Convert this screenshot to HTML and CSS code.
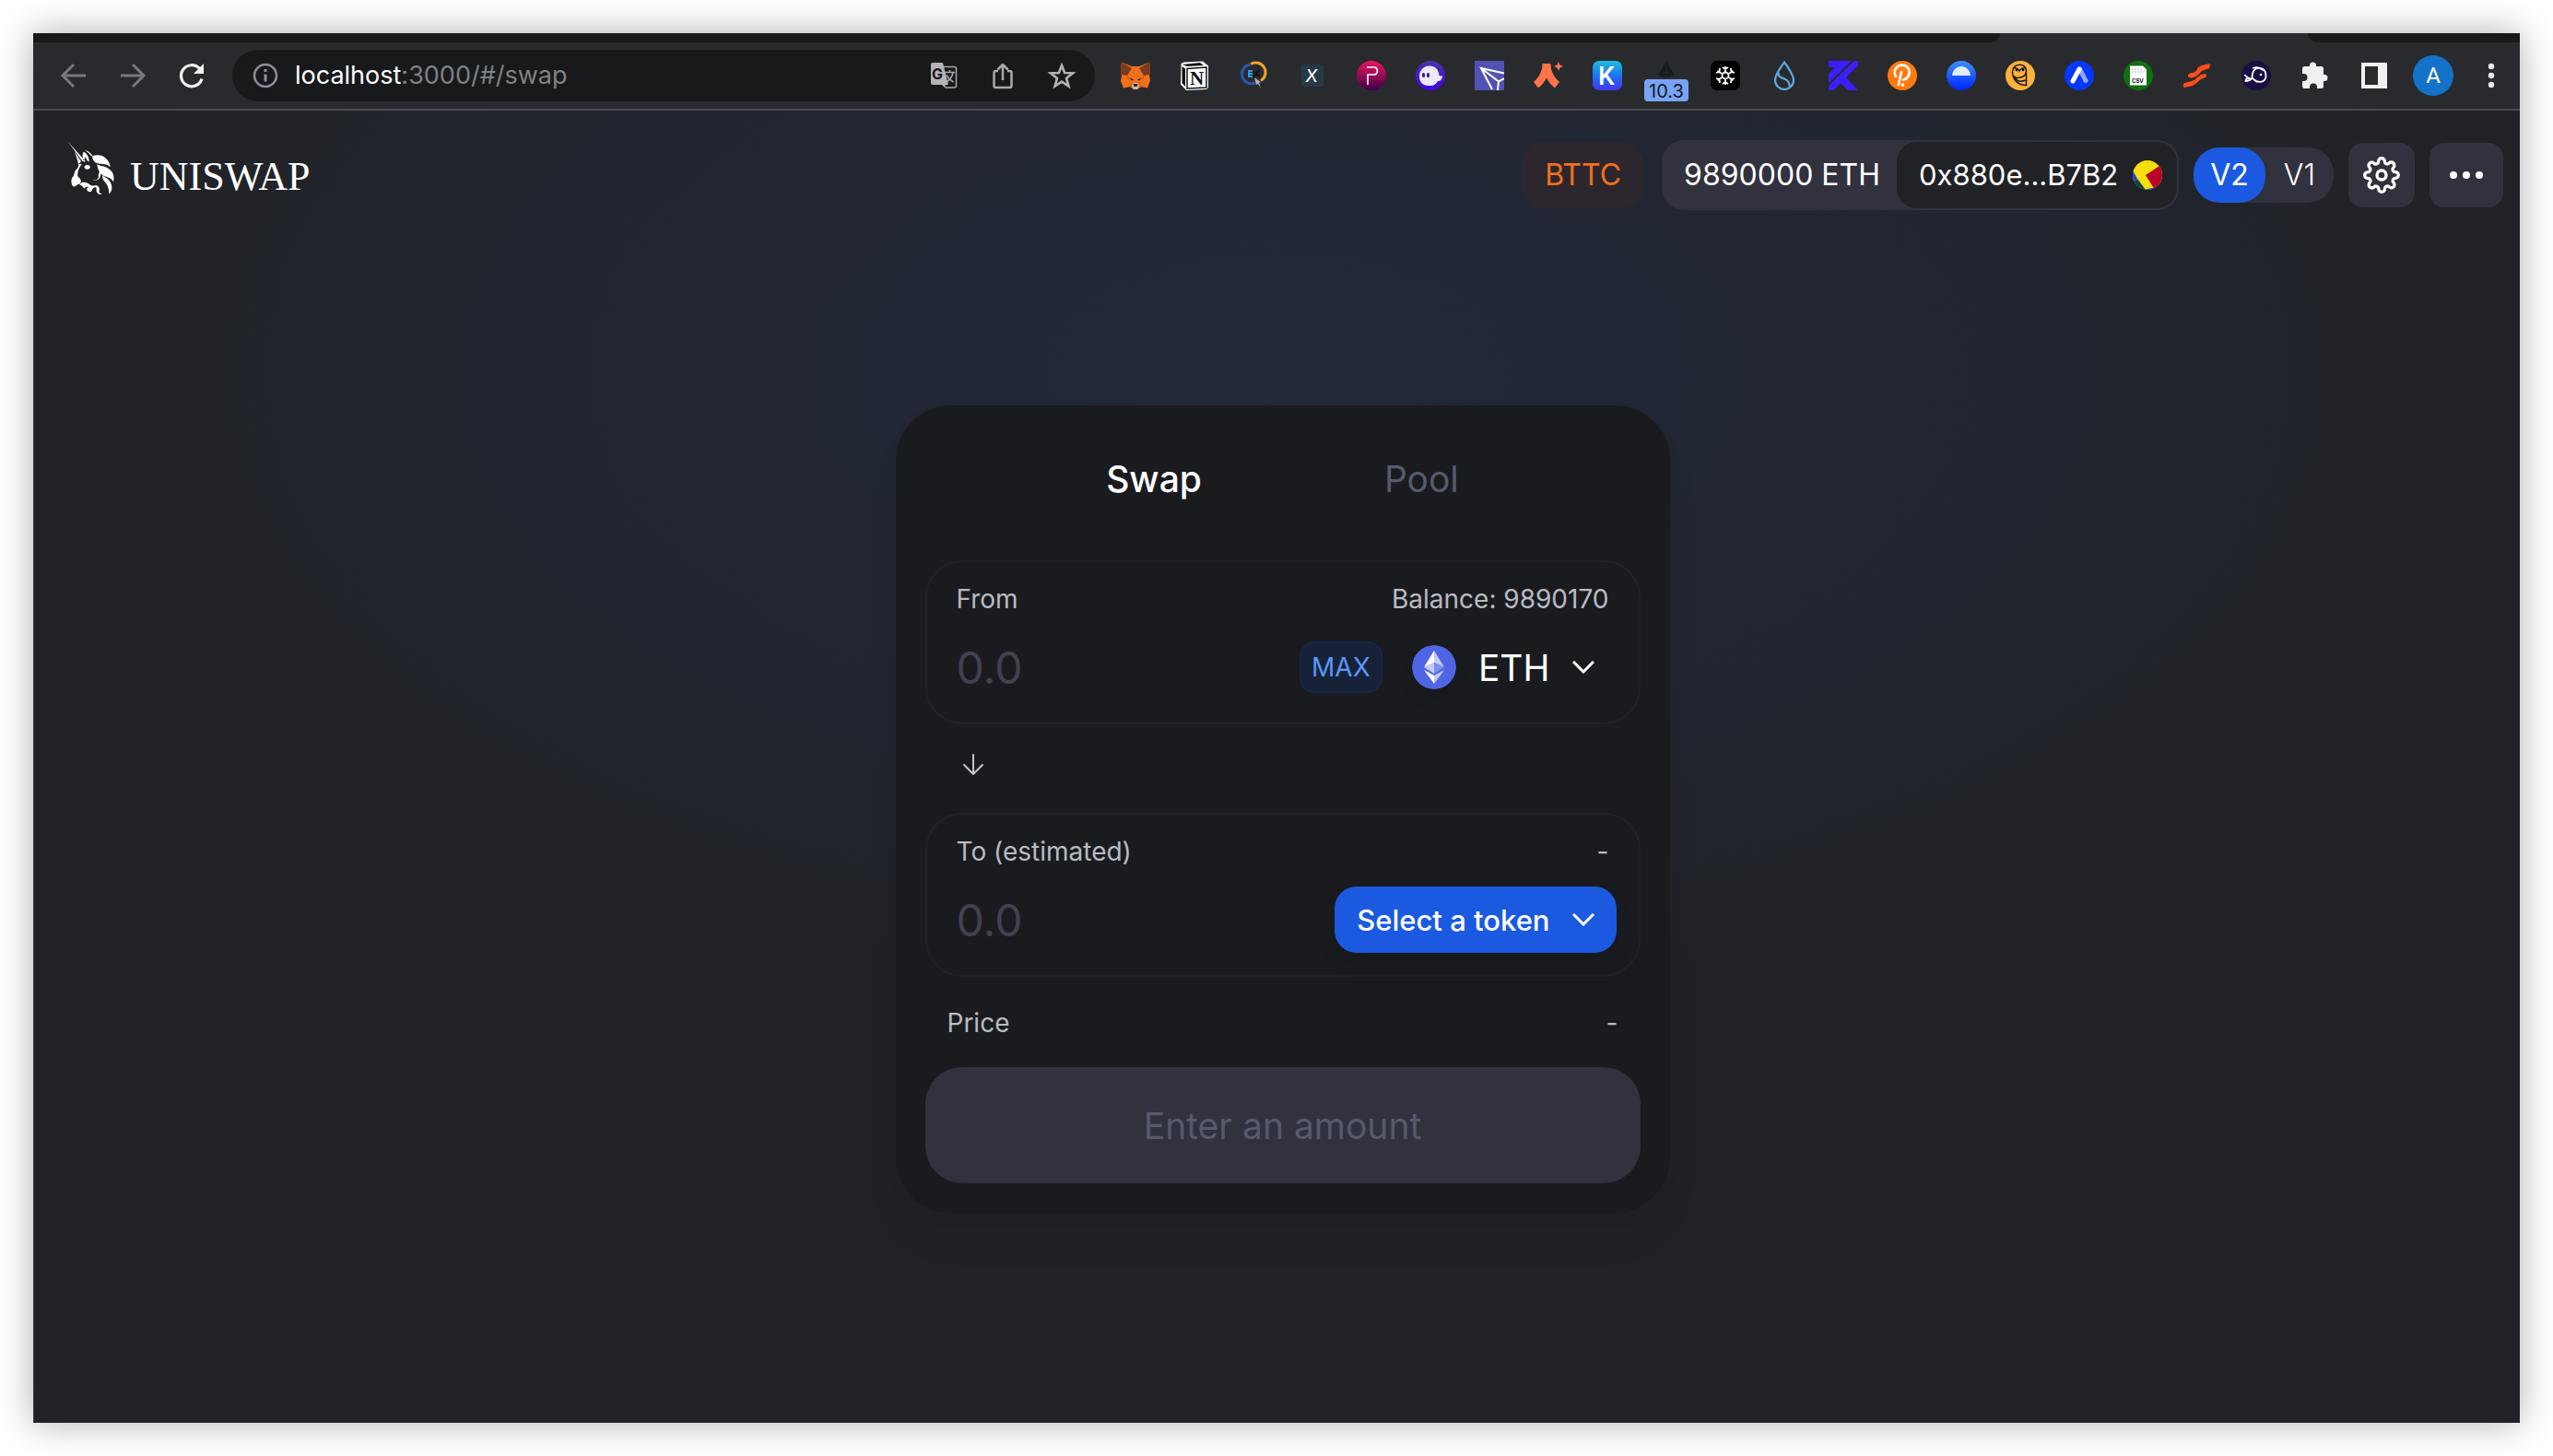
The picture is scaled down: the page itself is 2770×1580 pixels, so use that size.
FILE: index.html
```html
<!DOCTYPE html>
<html lang="en">
<head>
<meta charset="utf-8">
<title>Uniswap Interface</title>
<link rel="stylesheet" href="styles.css">
</head>
<body>
<div class="window">
  <div class="tabstrip"><span class="tab-rest"></span><span class="tab-active"></span><span class="tab-end"></span></div>
  <div class="toolbar">
    <button class="tool" aria-label="Back"><svg viewBox="0 0 32 32" fill="none" stroke="#77797c" stroke-width="3"><path d="M29 16H5M16 4 4 16l12 12"/></svg></button>
    <button class="tool" aria-label="Forward"><svg viewBox="0 0 32 32" fill="none" stroke="#77797c" stroke-width="3"><path d="M3 16h24M16 4l12 12-12 12"/></svg></button>
    <button class="tool" aria-label="Reload"><svg viewBox="0 0 32 32"><path d="M27 19.500A11.500 11.500 0 1 1 24.500 8.500" fill="none" stroke="#f1f1f2" stroke-width="3.200"/><path d="M29 3v11H18z" fill="#f1f1f2"/></svg></button>
    <div class="omnibox">
      <svg class="info" viewBox="0 0 28 28"><circle cx="14" cy="14" r="12" fill="none" stroke="#8b9199" stroke-width="2.500"/><path d="M12.500 12.500h3v8h-3zM12.500 7h3v3h-3z" fill="#8b9199"/></svg>
      <span class="url"><b>localhost</b>:3000/#/swap</span>
      <button class="tool" aria-label="Translate"><svg viewBox="0 0 32 32"><path d="M15 6.500h12.500a2 2 0 0 1 2 2v18.500a2 2 0 0 1-2 2H17" fill="none" stroke="#a9a9aa" stroke-width="1.500"/><path d="M17 12.500h11M22.500 10v2.500M18.500 23c4-2 6.500-6 7.500-10M19 15.500c1.500 3 4 5.500 7.500 7.500" fill="none" stroke="#a9a9aa" stroke-width="1.600"/><path d="M4 2h9.500a2 2 0 0 1 1.800 1.300L21 26h-3l-1 3-3-3H4a2 2 0 0 1-2-2V4a2 2 0 0 1 2-2z" fill="#b4b4b5"/><text x="3" y="20" font-family="Inter, sans-serif" font-size="16" font-weight="700" fill="#18191b">G</text></svg></button>
      <button class="tool" aria-label="Share"><svg viewBox="0 0 32 32" fill="none" stroke="#a9a9aa" stroke-width="2.500" stroke-linejoin="round"><path d="M11 11H8.500a2 2 0 0 0-2 2v14a2 2 0 0 0 2 2h15a2 2 0 0 0 2-2V13a2 2 0 0 0-2-2H21M16 21V4M10.500 9.500 16 4l5.500 5.500"/></svg></button>
      <button class="tool" aria-label="Bookmark"><svg viewBox="0 0 32 32" fill="none" stroke="#b4b4b5" stroke-width="2.600"><path d="m16 5 3.100 8 8.900.400-7 5.500 2.400 8.600L16 22.600l-7.400 4.900 2.400-8.600-7-5.500 8.900-.400z"/></svg></button>
    </div>
    <div class="extensions">
      <button class="tool" aria-label="MetaMask"><svg viewBox="0 0 32 32"><path d="M1 1.500 12 6h8l11-4.500 1 9-1 5 1 6-3 8-7-1.500L18 31h-4l-4-3-7 1.500L0 22l1-6-1-5z" fill="#f0701c"/><path d="M1 1.500 12 8 7 16 1 15 0 10zM31 1.500 20 8l5 8 6-1 1-5z" fill="#7b3a20"/><path d="m7 16 5.500 4.500L7 20zM25 16l-5.500 4.500L25 20zM3 29.500l7-2.500 3-5-2 6zM29 29.500 22 27l-3-5 2 6z" fill="#d75a14"/><path d="m12 27 2-3h4l2 3-2 4h-4z" fill="#cdbdac"/><path d="M13.500 25h5l-1 3h-3zM10 18.500l4 2-2 1zM22 18.500l-4 2 2 1z" fill="#20262c"/></svg></button>
      <button class="tool" aria-label="Notion"><svg viewBox="0 0 32 32"><path d="m1.500 3 3-1.500L25 .500l6 5V29l-2 2-22 1L1 25.500z" fill="#fff"/><path d="m3 4 19-2 4 3-18 1zM2.500 6 6 8.500V28l-3.500-4z" fill="#111"/><path d="m8 8.500 21-1.500v22L8 30z" fill="#fff" stroke="#111" stroke-width="1.500"/><text x="11" y="26" font-family="Liberation Serif, serif" font-size="21" font-weight="700" fill="#111">N</text></svg></button>
      <button class="tool" aria-label="Explorer search"><svg viewBox="0 0 32 32"><g fill="none" stroke-width="3"><path d="M13 3.500a10.500 10.500 0 0 1 11 18" stroke="#eea52b"/><path d="M12 4a10.500 10.500 0 1 0 6 20" stroke="#2c56a8"/></g><path d="M10 10h5v2h-3v1h3v2h-3v1h3v2h-5z" fill="#2d9cdb"/><path d="m16 18 6-8M16 11l6 6" stroke="#101214" stroke-width="2"/><path d="m17 18 7 5-2 1 2 6-3-5-2 1z" fill="#aeb0b3"/></svg></button>
      <button class="tool" aria-label="X wallet"><svg viewBox="0 0 32 32"><rect x="4" y="4" width="24" height="24" rx="3" fill="#263a45"/><text x="9" y="23" font-family="Lato, sans-serif" font-size="20" font-style="italic" fill="#fff">X</text></svg></button>
      <button class="tool" aria-label="Pontem"><svg viewBox="0 0 32 32"><defs><linearGradient id="gp" x2="0" y2="1"><stop stop-color="#ef1262"/><stop offset="1" stop-color="#3d0148"/></linearGradient></defs><circle cx="16" cy="16" r="16" fill="url(#gp)"/><path d="M12 26V15h8a4.500 4.500 0 0 0 0-8h-9" fill="none" stroke="#fff" stroke-width="1.600"/></svg></button>
      <button class="tool" aria-label="Phantom"><svg viewBox="0 0 32 32"><defs><linearGradient id="gg" x2="0" y2="1"><stop stop-color="#4936a8"/><stop offset="1" stop-color="#4302ec"/></linearGradient></defs><circle cx="16" cy="16" r="16" fill="url(#gg)"/><path d="M4 17C4 10 9 5.500 15 5.500S25 9 25.500 16c1.500 1 3 0 3.500.500-.500 4.500-3 5.500-5 5.500-3 5-6 5-10 5-5 0-10-3-10-10z" fill="#eceaf6"/><rect x="7" y="13" width="3" height="5" rx="1.500" fill="#3b1d91"/><rect x="12" y="13" width="3" height="5" rx="1.500" fill="#3b1d91"/></svg></button>
      <button class="tool" aria-label="TronLink"><svg viewBox="0 0 32 32"><path d="M0 0h32v32H0z" fill="#5352b4"/><path d="M32 13.500 7 8l12 23M7 8l19 14.500L25 32M26 22.500l6-3.500" fill="none" stroke="#fff" stroke-width="2"/></svg></button>
      <button class="tool" aria-label="Argent"><svg viewBox="0 0 32 32" fill="#ff734a"><path d="M9.500 3h9c0 8 3 14 9.500 20l-5 6.500c-4-3-7-7-9-11-2 4-5 8-9 11L0 23C6.500 17 9.500 11 9.500 3zM27 1l1.500 3.500L32 6l-3.500 1.500L27 11l-1.500-3.500L22 6l3.500-1.500z"/></svg></button>
      <button class="tool" aria-label="Keplr"><svg viewBox="0 0 32 32"><defs><linearGradient id="gk" x2="0" y2="1"><stop stop-color="#1fbcd9"/><stop offset=".5" stop-color="#1c75f2"/><stop offset="1" stop-color="#4434ee"/></linearGradient></defs><rect width="32" height="32" rx="7" fill="url(#gk)"/><text x="6" y="26" font-family="Roboto, sans-serif" font-size="28" font-weight="500" fill="#fff">K</text></svg></button>
      <button class="tool with-badge" aria-label="Gas price 10.3"><svg viewBox="0 0 32 32"><path d="M16 0 7 16l9 2 9-2zM7 18h18" fill="#17181a"/><path d="M16 1v17M7 16l9-4 9 4" fill="none" stroke="#242528" stroke-width="1"/></svg><span class="badge">10.3</span></button>
      <button class="tool" aria-label="Snowflake wallet"><svg viewBox="0 0 32 32"><rect width="32" height="32" rx="7" fill="#000"/><g fill="none" stroke="#fff" stroke-width="1.800"><circle cx="16" cy="16" r="3.500"/><path d="M16 12V6M16 20v6M19.500 14l5-3M12.500 18l-5 3M19.500 18l5 3M12.500 14l-5-3M13 7l3 2 3-2M13 25l3-2 3 2M22 8l.500 4L26 13M10 24l-.500-4L6 19M22 24l.500-4L26 19M10 8l-.500 4L6 13"/></g></svg></button>
      <button class="tool" aria-label="Sui"><svg viewBox="0 0 32 32" fill="none" stroke="#5fa9e4" stroke-width="2.200"><path d="M16 1.500C21 9 26 15 26 21a10 10 0 0 1-20 0c0-6 5-12 10-19.500zM10 13c-1 5 3 5 7 7s5 4 4.500 8"/></svg></button>
      <button class="tool" aria-label="Kaikas"><svg viewBox="0 0 32 32" fill="#3b1ffc"><path d="M0 0h25L0 24V14l7-7H0zM28 0h4v5L19 18l13 14H21l-8-8-7 8H0v-5z"/></svg></button>
      <button class="tool" aria-label="Polkadot"><svg viewBox="0 0 32 32"><circle cx="16" cy="16" r="16" fill="#ff7a10"/><path d="M9 17a8 8 0 1 1 8 3.500M15 12l-3 14" fill="none" stroke="#fff" stroke-width="2.600" stroke-linecap="round"/><circle cx="16.500" cy="26" r="1.800" fill="#fff"/></svg></button>
      <button class="tool" aria-label="Horizon wallet"><svg viewBox="0 0 32 32"><defs><linearGradient id="gh" x2="0" y2="1"><stop stop-color="#3a92ff"/><stop offset="1" stop-color="#0022fb"/></linearGradient></defs><circle cx="16" cy="16" r="16" fill="url(#gh)"/><path d="M6 16a10 10 0 0 1 20 0z" fill="#e4edf7"/></svg></button>
      <button class="tool" aria-label="Owl wallet"><svg viewBox="0 0 32 32"><circle cx="16" cy="16" r="16" fill="#fdb13b"/><g fill="none" stroke="#1d1b17" stroke-width="1.500"><path d="M22.500 11v15.500C14 26.500 7.500 21 7.500 12c0-10 15-10 15-1 0 8-12 9-14 5M8 8c3-1 6 1 7 3 1-2 4-4 7-3M10 17c2 6 6 6 12 4"/></g><circle cx="12" cy="10" r="1.300"/><circle cx="19" cy="10" r="1.300"/></svg></button>
      <button class="tool" aria-label="Aptos wallet"><svg viewBox="0 0 32 32"><circle cx="16" cy="16" r="16" fill="#0638fb"/><path d="m16.500 9 6.500 12.500" stroke="#8fa4fd" stroke-width="5" stroke-linecap="round"/><path d="M16 9 9 22" stroke="#fff" stroke-width="5" stroke-linecap="round"/></svg></button>
      <button class="tool" aria-label="CSV export"><svg viewBox="0 0 32 32"><circle cx="16" cy="16" r="16" fill="#0f700f"/><path d="M7 5.500h14l4 4v17H7z" fill="#fff"/><path d="M9 9h11M9 12h14" stroke="#b9b9be" stroke-dasharray="2 1"/><text x="9" y="24" font-family="Inter, sans-serif" font-size="6" font-weight="700" fill="#222">CSV</text></svg></button>
      <button class="tool" aria-label="Solflare"><svg viewBox="0 0 32 32" fill="#fb4e17"><path d="m17 7 4-2 8-2c1 0 1 3 0 5l-8 3-5 5c-4 3-9 3-10 1 0-3 1-3 4-4 4 0 5-2 7-6zM16 18l4-3 5-1c1 0 1 3 0 4l-5 2-6 5-3 2-9 2c-2 0-1-4 0-5l8-2c3-1 4-2 6-4z"/></svg></button>
      <button class="tool" aria-label="Fish wallet"><svg viewBox="0 0 32 32"><circle cx="16" cy="16" r="16" fill="#190f43"/><path d="M3.500 15c1 3 4 3 5 4-2 0-4 1-4 3 4 0 6-1 7-4 0-5 2-9 6-10 6-1 9 3 9 8 0 6-5 8-10 6M12 8c5-2 8-1 11 2M12 19l5 4" fill="none" stroke="#fff" stroke-width="1.800"/><circle cx="21" cy="15" r="1.300" fill="#fff"/></svg></button>
      <button class="tool" aria-label="Extensions"><svg viewBox="0 0 32 32"><path d="M2 8.500A2.500 2.500 0 0 1 4.500 6H10V5a3.500 3.500 0 0 1 7 0v1h5.500A2.500 2.500 0 0 1 25 8.500V15h1a3.500 3.500 0 0 1 0 7h-1v5.500a2.500 2.500 0 0 1-2.500 2.500H18v-1.500a4 4 0 0 0-8 0V30H4.500A2.500 2.500 0 0 1 2 27.500V22h1.500a4 4 0 0 0 0-8H2z" fill="#eff0f2"/></svg></button>
      <button class="tool" aria-label="Side panel"><svg viewBox="0 0 32 32"><path d="M2 2h28v28H2zM6 6v20h14V6z" fill="#eff0f2" fill-rule="evenodd"/></svg></button>
      <button class="tool" aria-label="Profile"><span class="avatar">A</span></button>
      <button class="tool" aria-label="Browser menu"><svg viewBox="0 0 32 32" fill="#e8e9eb"><circle cx="16" cy="6" r="3.200"/><circle cx="16" cy="16" r="3.200"/><circle cx="16" cy="26" r="3.200"/></svg></button>
    </div>
  </div>

  <div class="page">
    <header class="header">
      <a class="logo" href="#/swap">
        <svg viewBox="20 14 156 180" fill="#fff" aria-hidden="true"><path d="M21 17 67 80c3 4 9 5 13 4L38 37zM43 51l22 33-9 8c-3-17-10-32-13-41zM74 81c-5-9-5-24-1-29 8 4 18 12 18 32-4 1-9-5-11-16-3 5-3 9-6 13z"/><path d="M78 48c10 1 17 7 24 17l-5 1C92 57 85 53 78 48zM101 66c25-10 52 1 60 36-16-14-35-7-50-15-5-3-10-13-10-21zM117 93c13 8 29 5 41 17 12 9 16 23 12 40-6-12-20-16-31-19-14-7-20-22-22-38zM134 130c22 8 33 25 31 44-2 8-6 14-9 16 0-15-2-21-8-33-6-9-14-13-14-27z"/><path d="M56 91c2 5 0 12-8 20-6 8-4 18-12 25-5 10-3 21 3 29 7 2 11-4 15-6 4-1 8-5 11-10-1-9-7-13-11-17-2-11 3-27 13-40zM126 108c8 24 0 39-25 38 15-1 23-6 20-18 1-7 6-14 5-20zM59 158c10-11 24-7 32-1 7 7 16 5 26 5 8 5 8 10 7 17-1 9 9 12 12 9-8 7-24 0-21-14 1-10-12-8-14 2-2 9-14 8-17 1-2-7 2-10 8-7-6-8-17-1-17 3-2-6-8-12-16-15z"/><ellipse cx="85" cy="102" rx="9" ry="7"/></svg>
        <span>UNISWAP</span>
      </a>
      <div class="controls">
        <span class="network">BTTC</span>
        <div class="account">
          <span class="balance">9890000 ETH</span>
          <button class="address">0x880e...B7B2
            <svg viewBox="0 0 32 32" aria-hidden="true"><defs><clipPath id="round"><circle cx="16" cy="16" r="16"/></clipPath></defs><g clip-path="url(#round)"><path d="M0 0h32v32H0z" fill="#f5df0c"/><path d="m14 16 18-12v28h-8z" fill="#bd0329"/><path d="m0 24 5-4 9 12H0z" fill="#113e50"/><path d="M0 11 5 20 0 24zM12 32l13-3v3z" fill="#1c3fe4"/></g></svg>
          </button>
        </div>
        <div class="versions"><button class="version current">V2</button><a class="version" href="#/v1">V1</a></div>
        <button class="square" aria-label="Settings"><svg viewBox="0 0 24 24" fill="none" stroke="#fff" stroke-width="2" stroke-linecap="round" stroke-linejoin="round"><circle cx="12" cy="12" r="3"/><path d="M19.400 15a1.650 1.650 0 0 0 .33 1.820l.06.06a2 2 0 0 1 0 2.830 2 2 0 0 1-2.830 0l-.06-.06a1.650 1.650 0 0 0-1.820-.33 1.650 1.650 0 0 0-1 1.510V21a2 2 0 0 1-2 2 2 2 0 0 1-2-2v-.09A1.650 1.650 0 0 0 9 19.400a1.650 1.650 0 0 0-1.820.33l-.06.06a2 2 0 0 1-2.830 0 2 2 0 0 1 0-2.830l.06-.06a1.650 1.650 0 0 0 .33-1.820 1.650 1.650 0 0 0-1.510-1H3a2 2 0 0 1-2-2 2 2 0 0 1 2-2h.09A1.650 1.650 0 0 0 4.600 9a1.650 1.650 0 0 0-.33-1.820l-.06-.06a2 2 0 0 1 0-2.830 2 2 0 0 1 2.830 0l.06.06a1.650 1.650 0 0 0 1.820.33H9a1.650 1.650 0 0 0 1-1.510V3a2 2 0 0 1 2-2 2 2 0 0 1 2 2v.09a1.650 1.650 0 0 0 1 1.510 1.650 1.650 0 0 0 1.820-.33l.06-.06a2 2 0 0 1 2.830 0 2 2 0 0 1 0 2.830l-.06.06a1.650 1.650 0 0 0-.33 1.820V9a1.650 1.650 0 0 0 1.510 1H21a2 2 0 0 1 2 2 2 2 0 0 1-2 2h-.09a1.650 1.650 0 0 0-1.510 1z"/></svg></button>
        <button class="square more" aria-label="More"><svg viewBox="0 0 40 40" fill="#fff"><circle cx="6" cy="20" r="4"/><circle cx="20" cy="20" r="4"/><circle cx="34" cy="20" r="4"/></svg></button>
      </div>
    </header>

    <main class="main">
      <section class="card">
        <nav class="tabs"><a class="active" href="#/swap">Swap</a><a href="#/pool">Pool</a></nav>
        <div class="field">
          <div class="field-head"><label for="from">From</label><span>Balance: 9890170</span></div>
          <div class="field-row">
            <input id="from" type="text" inputmode="decimal" placeholder="0.0">
            <button class="max">MAX</button>
            <button class="token">
              <svg class="eth" viewBox="0 0 48 48" aria-hidden="true"><circle cx="24" cy="24" r="24" fill="#5065e4"/><path d="M24 6v13L13 24z" fill="#fff"/><path d="m24 6 11 18-11-5z" fill="#c3cbf6"/><path d="m13 24 11-5v12z" fill="#c3cbf6"/><path d="m35 24-11-5v12z" fill="#7f8fec"/><path d="m13 27 11 6v9z" fill="#fff"/><path d="m35 27-11 6v9z" fill="#c3cbf6"/></svg>
              <span>ETH</span>
              <svg class="chevron" viewBox="0 0 24 14" fill="none" stroke="#fff" stroke-width="3"><path d="m1 1 11 11L23 1"/></svg>
            </button>
          </div>
        </div>
        <div class="switch"><button aria-label="Switch direction"><svg viewBox="0 0 24 24" fill="none" stroke="#c3c5cb" stroke-width="2" stroke-linecap="round" stroke-linejoin="round"><path d="M12 1v21M2 12l10 10 10-10"/></svg></button></div>
        <div class="field">
          <div class="field-head"><label for="to">To (estimated)</label><span>-</span></div>
          <div class="field-row">
            <input id="to" type="text" inputmode="decimal" placeholder="0.0">
            <button class="token select">
              <span>Select a token</span>
              <svg class="chevron" viewBox="0 0 24 14" fill="none" stroke="#fff" stroke-width="3"><path d="m1 1 11 11L23 1"/></svg>
            </button>
          </div>
        </div>
        <div class="price"><span>Price</span><span>-</span></div>
        <button class="submit" disabled>Enter an amount</button>
      </section>
    </main>
  </div>
</div>
</body>
</html>
```
FILE: styles.css
```css
* { box-sizing: border-box; }

body {
  margin: 0;
  min-height: 100vh;
  padding: 36px;
  display: flex;
  background: #fff;
  color: #fff;
  font-family: Inter, "Liberation Sans", sans-serif;
}

button {
  margin: 0;
  padding: 0;
  border: 0;
  background: none;
  color: inherit;
  font: inherit;
}

a { color: inherit; text-decoration: none; }
svg { display: block; flex: none; }

.window {
  flex: 1;
  min-width: 0;
  display: flex;
  flex-direction: column;
  background: #212226;
  box-shadow: 0 0 36px rgba(0, 0, 0, .32);
}

/* Browser chrome */
.tabstrip { display: flex; height: 10px; background: #292a2d; }
.tab-rest { flex: 1; background: #18191b; border-bottom-right-radius: 10px; }
.tab-active { width: 334px; }
.tab-end { width: 230px; background: #18191b; border-bottom-left-radius: 10px; }

.toolbar {
  display: flex;
  align-items: center;
  height: 74px;
  padding-left: 12px;
  background: #292a2d;
  border-bottom: 2px solid #4b4c4f;
}

.tool {
  flex: none;
  width: 64px;
  height: 64px;
  display: flex;
  align-items: center;
  justify-content: center;
}
.tool svg { width: 32px; height: 32px; }

.omnibox {
  flex: 1;
  min-width: 0;
  height: 56px;
  margin: 0 12px;
  padding: 0 4px 0 22px;
  display: flex;
  align-items: center;
  border-radius: 28px;
  background: #18191b;
}
.info { width: 28px; height: 28px; }
.url {
  flex: 1;
  margin-left: 18px;
  font-size: 27px;
  line-height: 36px;
  color: #808183;
}
.url b { font-weight: 400; color: #fff; }

.extensions { display: flex; align-items: center; }
.extensions .tool:last-child { width: 62px; }

.with-badge { position: relative; }
.badge {
  position: absolute;
  top: 36px;
  left: 8px;
  width: 48px;
  height: 24px;
  border-radius: 4px;
  background: #78a3f6;
  color: #18191b;
  font-size: 20px;
  line-height: 26px;
  text-align: center;
}
.avatar {
  width: 44px;
  height: 44px;
  border-radius: 50%;
  background: #1273c8;
  font-family: Roboto, sans-serif;
  font-size: 24px;
  line-height: 44px;
  text-align: center;
}

/* App */
.page {
  flex: 1;
  border-left: 1px solid #3a3b3f;
  background: radial-gradient(50% 50% at 50% 20%, rgba(33, 98, 220, .1) 0%, rgba(33, 98, 220, .05) 60%, rgba(33, 98, 220, 0) 100%);
}

.header {
  display: flex;
  justify-content: space-between;
  align-items: center;
  padding: 32px 18px 0 36px;
}
.logo {
  display: flex;
  align-items: flex-start;
  gap: 16px;
  height: 76px;
  font-family: "Liberation Serif", serif;
  font-size: 44px;
  line-height: 48px;
}
.logo svg { width: 52px; height: 60px; }
.logo span { padding-top: 16px; }

.controls {
  display: flex;
  align-items: center;
  gap: 16px;
  font-size: 32px;
  line-height: 40px;
}
.network {
  margin-right: 4px;
  padding: 16px 24px;
  border-radius: 24px;
  background: #2c272f;
  color: #f3701c;
}
.account {
  display: flex;
  align-items: center;
  border-radius: 24px;
  background: #31323e;
}
.balance { padding: 0 16px 0 24px; }
.address {
  display: flex;
  align-items: center;
  gap: 16px;
  height: 76px;
  padding: 0 16px 0 24px;
  border: 2px solid #31323e;
  border-radius: 24px;
  background: #212226;
  font-size: 31px;
}
.address svg { width: 32px; height: 32px; }

.versions {
  display: flex;
  border-radius: 28px;
  background: #31323e;
}
.version {
  padding: 10px 20px;
  border-radius: 28px;
  font-weight: 300;
}
.version.current { padding: 10px 18px; background: #1b5ae0; font-weight: 400; }

.square {
  width: 72px;
  height: 70px;
  display: flex;
  align-items: center;
  justify-content: center;
  border-radius: 16px;
  background: #31323e;
}
.square svg { width: 40px; height: 40px; }
.square.more { width: 80px; }

.main {
  display: flex;
  justify-content: center;
  padding: 212px 0 64px 12px;
}
.card {
  width: 840px;
  padding: 0 32px 32px;
  border-radius: 60px;
  background: #1a1b1f;
  box-shadow: 0 32px 48px rgba(0, 0, 0, .03), 0 8px 16px rgba(0, 0, 0, .04);
}

.tabs {
  display: flex;
  justify-content: center;
  gap: 198px;
  padding: 56px 0 64px;
  font-size: 39px;
  line-height: 48px;
  color: #565a6d;
}
.tabs .active { color: #fff; font-weight: 500; }

.field {
  padding: 22px 24px 24px;
  border: 2px solid #212226;
  border-radius: 40px;
}
.field-head, .price {
  display: flex;
  justify-content: space-between;
  font-size: 28px;
  line-height: 36px;
  color: #b9bbc2;
}
.field-head { padding: 0 8px; margin-bottom: 20px; }
.field-row { display: flex; align-items: center; }
.field-row input {
  flex: 1;
  min-width: 0;
  height: 72px;
  padding: 0 8px;
  border: 0;
  background: none;
  color: #fff;
  font: inherit;
  font-size: 48px;
}
.field-row input::placeholder { color: #41424f; opacity: 1; }

.max {
  height: 56px;
  width: 90px;
  margin-right: 8px;
  border: 2px solid #14274b;
  border-radius: 16px;
  background: #172238;
  color: #5c95fb;
  font-size: 28px;
}
.token {
  display: flex;
  align-items: center;
  height: 72px;
  padding: 0 24px;
  border-radius: 24px;
  font-size: 39px;
}
.eth { width: 48px; height: 48px; margin-right: 24px; border-radius: 50%; box-shadow: 0 12px 16px rgba(0, 0, 0, .08); }
.chevron { width: 24px; height: 14px; margin-left: 24px; }
.token.select {
  background: #1b5ae0;
  font-size: 31px;
  font-weight: 500;
  box-shadow: 0 12px 20px rgba(0, 0, 0, .1);
}

.switch { display: flex; align-items: center; height: 96px; padding: 0 40px 8px; }
.switch svg { width: 24px; height: 24px; }

.price { padding: 32px 24px 30px; }

.submit {
  width: 100%;
  height: 126px;
  border-radius: 40px;
  background: #31323e;
  color: #565a6d;
  font-size: 39px;
}
```
